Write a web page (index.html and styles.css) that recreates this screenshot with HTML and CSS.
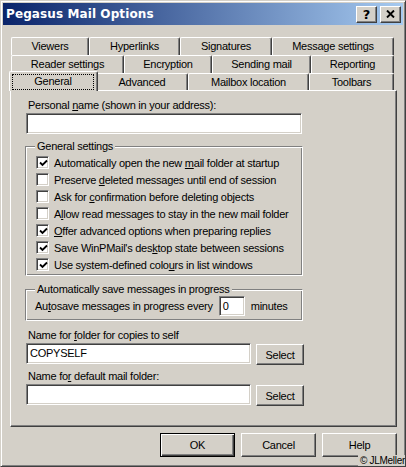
FILE: index.html
```html
<!DOCTYPE html>
<html>
<head>
<meta charset="utf-8">
<title>Pegasus Mail Options</title>
<link rel="stylesheet" href="styles.css">
</head>
<body>
<div class="window">
  <div class="titlebar">
    <span class="title">Pegasus Mail Options</span>
    <div class="tbtns">
      <span class="tbtn help">?</span>
      <span class="tbtn"><svg width="9" height="8" viewBox="0 0 9 8"><path d="M1 0.5 L8 7.5 M8 0.5 L1 7.5" stroke="#000" stroke-width="1.9" fill="none"/></svg></span>
    </div>
  </div>
  <div class="content">
    <div class="tabs">
      <div class="tabrow r1">
        <div class="tab">Viewers</div><div class="tab">Hyperlinks</div><div class="tab">Signatures</div><div class="tab">Message settings</div>
      </div>
      <div class="tabrow r2">
        <div class="tab">Reader settings</div><div class="tab">Encryption</div><div class="tab">Sending mail</div><div class="tab">Reporting</div>
      </div>
      <div class="tabrow r3">
        <div class="tab active"><span class="focus">General</span></div><div class="tab">Advanced</div><div class="tab">Mailbox location</div><div class="tab">Toolbars</div>
      </div>
    </div>
    <div class="panel">
      <div class="label">Personal <u>n</u>ame (shown in your address):</div>
      <div class="input wide"></div>
      <fieldset class="group g1">
        <legend>General settings</legend>
        <div class="check"><span class="cb"><svg width="9" height="9" viewBox="0 0 9 9"><path d="M1 3.5 L3.5 6 L8 1.5" stroke="#000" stroke-width="1.8" fill="none"/></svg></span><span>Automatically open the new <u>m</u>ail folder at startup</span></div>
        <div class="check"><span class="cb"></span><span>Preserve <u>d</u>eleted messages until end of session</span></div>
        <div class="check"><span class="cb"></span><span>Ask for <u>c</u>onfirmation before deleting objects</span></div>
        <div class="check"><span class="cb"></span><span>A<u>l</u>low read messages to stay in the new mail folder</span></div>
        <div class="check"><span class="cb"><svg width="9" height="9" viewBox="0 0 9 9"><path d="M1 3.5 L3.5 6 L8 1.5" stroke="#000" stroke-width="1.8" fill="none"/></svg></span><span><u>O</u>ffer advanced options when preparing replies</span></div>
        <div class="check"><span class="cb"><svg width="9" height="9" viewBox="0 0 9 9"><path d="M1 3.5 L3.5 6 L8 1.5" stroke="#000" stroke-width="1.8" fill="none"/></svg></span><span>Save WinPMail's des<u>k</u>top state between sessions</span></div>
        <div class="check"><span class="cb"><svg width="9" height="9" viewBox="0 0 9 9"><path d="M1 3.5 L3.5 6 L8 1.5" stroke="#000" stroke-width="1.8" fill="none"/></svg></span><span>Use system-defined colo<u>u</u>rs in list windows</span></div>
      </fieldset>
      <fieldset class="group g2">
        <legend>Automatically save messages in progress</legend>
        <div class="autosave"><span>Au<u>t</u>osave messages in progress every</span><span class="input small">0</span><span>minutes</span></div>
      </fieldset>
      <div class="label l2">Name for <u>f</u>older for copies to self</div>
      <div class="field"><div class="input mid">COPYSELF</div><div class="btn select">Select</div></div>
      <div class="label l3">Name fo<u>r</u> default mail folder:</div>
      <div class="field"><div class="input mid"></div><div class="btn select">Select</div></div>
    </div>
    <div class="buttons">
      <div class="btn big default">OK</div>
      <div class="btn big">Cancel</div>
      <div class="btn big">Help</div>
    </div>
  </div>
  <div class="copy">© JLMeller</div>
</div>
</body>
</html>
```
FILE: styles.css
```css
* { box-sizing: border-box; }
html, body { margin: 0; padding: 0; }
body {
  background: #d4d0c8;
  font-family: "Liberation Sans", Arial, sans-serif;
  font-size: 11px;
  letter-spacing: -0.25px;
  color: #000;
}
.window {
  position: relative;
  width: 406px;
  height: 467px;
  border: 1px solid;
  border-color: #d4d0c8 #404040 #404040 #d4d0c8;
  box-shadow: inset 1px 1px #fff, inset -1px -1px #808080;
  padding: 2px;
  overflow: hidden;
}
.titlebar {
  height: 22px;
  display: flex;
  align-items: center;
  justify-content: space-between;
  background: linear-gradient(to right, #0a246a, #a6caf0);
  padding: 0 2px 0 3px;
}
.title {
  font-family: "DejaVu Sans", sans-serif;
  font-weight: bold;
  font-size: 12px;
  letter-spacing: 0.1px;
  color: #fff;
}
.tbtns { display: flex; gap: 3px; }
.tbtn {
  width: 21px;
  height: 17px;
  background: #d4d0c8;
  border: 1px solid;
  border-color: #fff #404040 #404040 #fff;
  box-shadow: inset -1px -1px #808080;
  display: flex;
  align-items: center;
  justify-content: center;
}
.tbtn.help {
  font-family: "DejaVu Sans", sans-serif;
  font-weight: bold;
  font-size: 13px;
  letter-spacing: 0;
  line-height: 1;
}
.content { padding: 12px 6px 0 7px; }
.tabs { margin: 0 3px 0 1px; }
.tabrow { display: grid; height: 18px; }
.tabrow.r3 { height: 17px; }
.r1 { grid-template-columns: 78px 91px 92px 122px; }
.r2 { grid-template-columns: 113px 88px 99px 83px; }
.r3 { grid-template-columns: 85px 92px 121px 85px; }
.tab {
  border-top: 1px solid #fff;
  border-left: 1px solid #fff;
  border-right: 1px solid #404040;
  box-shadow: inset -1px 0 #808080;
  border-radius: 2px 2px 0 0;
  text-align: center;
  line-height: 13px;
  padding-top: 2px;
  background: #d4d0c8;
}
.tab.active {
  position: relative;
  z-index: 1;
  margin: -2px -2px -1px -2px;
  padding: 2px 2px 0 2px;
}
.focus {
  display: block;
  height: 16px;
  border: 1px dotted #000;
  line-height: 13px;
  padding-top: 0;
  margin-right: 1px;
}
.panel {
  height: 337px;
  border: 1px solid;
  border-color: #fff #404040 #404040 #fff;
  box-shadow: inset -1px -1px #808080;
  padding: 8px 0 0 15px;
}
.label { line-height: 13px; padding-left: 2px; }
.input {
  background: #fff;
  border: 1px solid;
  border-color: #808080 #fff #fff #808080;
  box-shadow: inset 1px 1px #404040, inset -1px -1px #d4d0c8;
  padding: 3px 3px 0 3px;
  line-height: 13px;
}
.input.wide { width: 276px; height: 21px; margin-top: 1px; }
.group {
  margin: 6px 0 0 -1px;
  width: 278px;
  border: 1px solid;
  border-color: #808080 #fff #fff #808080;
  box-shadow: inset 1px 1px #fff, inset -1px -1px #808080;
  padding: 1px 0 2px 10px;
  min-width: 0;
}
.group legend {
  padding: 0 2px;
  margin-left: -1px;
  line-height: 13px;
  background: #d4d0c8;
}
.check {
  display: flex;
  align-items: center;
  gap: 5px;
  height: 17px;
}
.cb {
  width: 13px;
  height: 13px;
  flex: none;
  background: #fff;
  border: 1px solid;
  border-color: #808080 #fff #fff #808080;
  box-shadow: inset 1px 1px #404040, inset -1px -1px #d4d0c8;
  display: flex;
  align-items: center;
  justify-content: center;
  padding: 1px 0 0 1px;
}
.g2 { margin-top: 7px; padding: 0 0 4px 10px; }
.autosave {
  display: flex;
  align-items: center;
  gap: 6px;
  margin-left: -1px;
}
.input.small { width: 26px; height: 20px; padding-top: 3px; }
.l2 { margin-top: 8px; }
.l3 { margin-top: 5px; }
.field {
  display: flex;
  align-items: flex-start;
  gap: 5px;
  margin-top: 1px;
}
.input.mid { width: 225px; height: 21px; }
.btn {
  background: #d4d0c8;
  border: 1px solid;
  border-color: #fff #404040 #404040 #fff;
  box-shadow: inset -1px -1px #808080;
  display: flex;
  align-items: center;
  justify-content: center;
}
.btn.select { width: 48px; height: 21px; margin-top: 1px; }
.buttons {
  display: flex;
  justify-content: flex-end;
  gap: 6px;
  margin-top: 6px;
}
.btn.big { width: 75px; height: 24px; }
.btn.default {
  border: 1px solid #000;
  box-shadow: inset 1px 1px #fff, inset -1px -1px #404040, inset -2px -2px #808080;
}
.copy {
  position: absolute;
  right: 0;
  bottom: 0;
  font-size: 10px;
  letter-spacing: -0.3px;
  line-height: 11px;
  background: #d4d0c8;
  padding-left: 2px;
}
```
